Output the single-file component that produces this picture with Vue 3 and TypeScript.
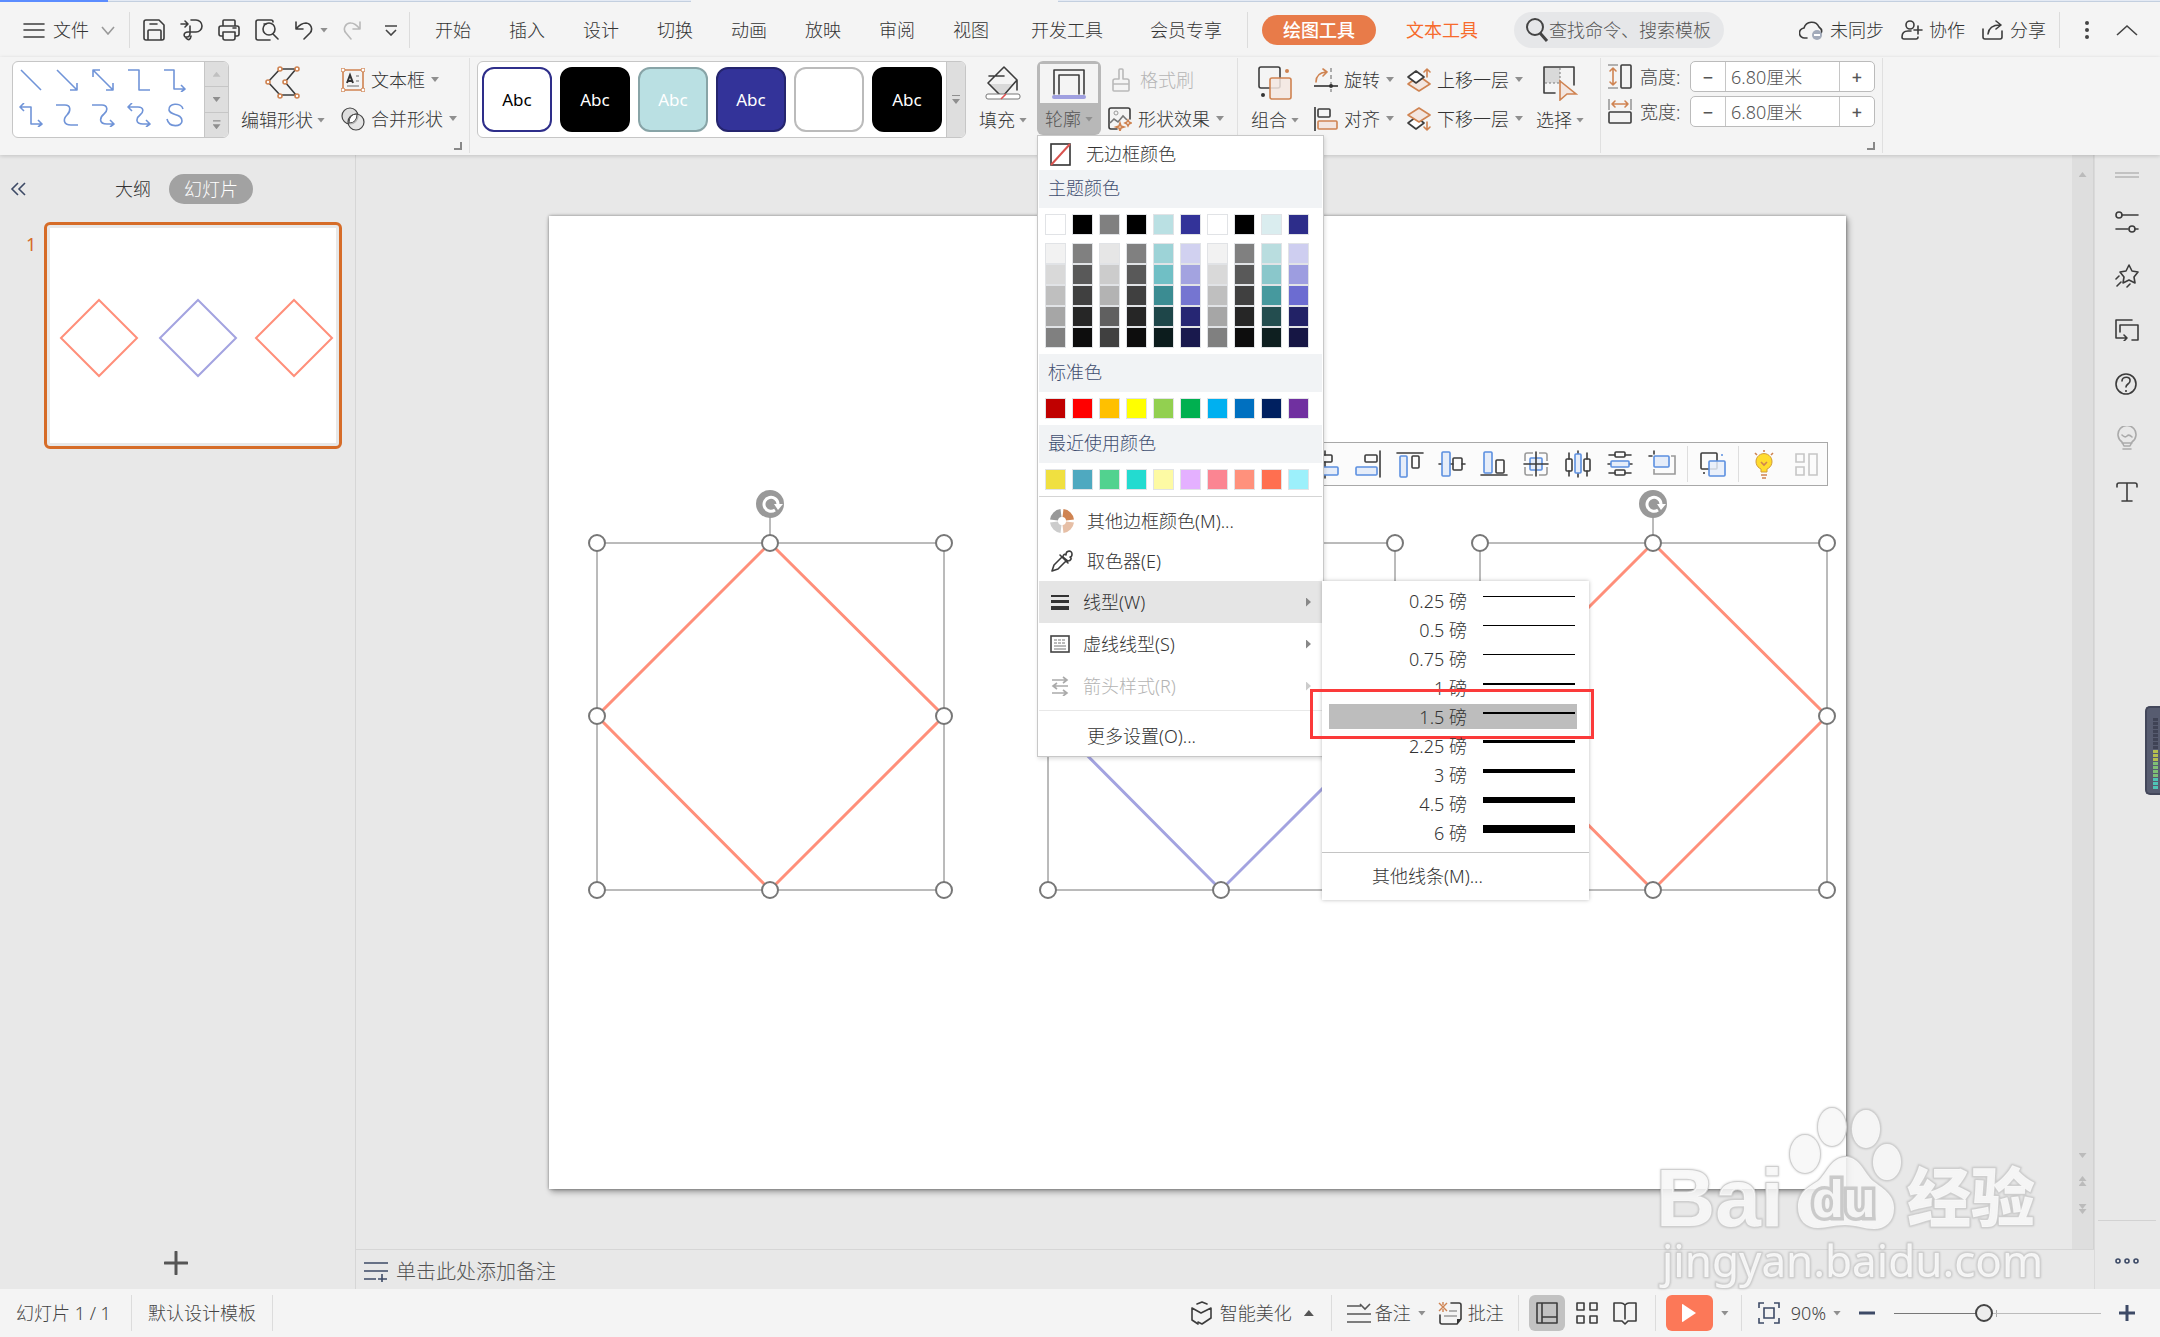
<script setup lang="ts">
import { h, ref, type FunctionalComponent } from 'vue'

const K = 'fill="none" stroke="#3c3c3c" stroke-width="1.6" stroke-linejoin="round" stroke-linecap="round"'
const G = 'fill="none" stroke="#b9b9b9" stroke-width="1.6" stroke-linejoin="round" stroke-linecap="round"'
const O = 'fill="none" stroke="#cf8351" stroke-width="1.6" stroke-linejoin="round" stroke-linecap="round"'
const OF = 'fill="#f3e6e0" stroke="#cf8351" stroke-width="1.6" stroke-linejoin="round"'
const B = 'fill="none" stroke="#7094d8" stroke-width="1.6" stroke-linejoin="round"'
const BF = 'fill="#e6edf9" stroke="#5b8fe0" stroke-width="1.6" stroke-linejoin="round"'
const N = 'fill="none" stroke="#3d4a66" stroke-width="1.6"'

/* name -> [width, height, markup] */
const icons: Record<string, [number, number, string]> = {
  burger: [22, 16, `<path ${K} d="M1 2h20M1 8h20M1 15h20"/>`],
  chev: [14, 9, `<path fill="none" stroke="#999" stroke-width="1.6" d="M1 1l6 7 6-7"/>`],
  save: [22, 22, `<path ${K} d="M3 1h13l5 5v13q0 2-2 2H3q-2 0-2-2V3q0-2 2-2zM5 21v-9q0-1 1-1h11q1 0 1 1v9M7 5h7"/>`],
  pdf: [23, 22, `<path ${K} d="M1 5h6M5 2l3 3-3 3M11 1h5a6 6 0 0 1 0 12H8c-5 0-5 6-1 5q3 0 3-4V7"/><path ${K} d="M6 19q4 4 5-2"/>`],
  print: [22, 22, `<path ${K} d="M5 7V2q0-1 1-1h10q1 0 1 1v5M5 17H3q-2 0-2-2V9q0-2 2-2h16q2 0 2 2v6q0 2-2 2h-2M5 13h12v6q0 2-2 2H7q-2 0-2-2zM15 9h3"/>`],
  preview: [24, 22, `<path ${K} d="M18 3q0-2-2-2H3Q1 1 1 3v16q0 2 2 2h12M11 5H9"/><circle ${K} cx="14" cy="10" r="6"/><path ${K} d="M18 15l5 5"/>`],
  undo: [19, 19, `<path ${K} d="M2 1v7h7M2 8Q7 2 12 2a6 6 0 0 1 4 10L10 18"/>`],
  redo: [19, 19, `<path ${G} d="M17 1v7h-7M17 8Q12 2 8 2a6 6 0 0 0-5 10L8 18"/>`],
  more: [12, 11, `<path fill="none" stroke="#444" stroke-width="1.6" d="M0 1h12M1 5l5 5 5-5"/>`],
  search: [24, 24, `<circle fill="none" stroke="#444" stroke-width="2" cx="10" cy="9" r="8"/><path fill="none" stroke="#444" stroke-width="3" d="M15 15l7 8"/>`],
  cloud: [25, 22, `<path ${K} d="M8 19H6a5 5 0 0 1-1-10a8 8 0 0 1 15-1q4 3 2 6"/><circle cx="18" cy="16" r="5" fill="#a3abba"/><path stroke="#fff" stroke-width="2" d="M15 16h6"/>`],
  team: [22, 20, `<circle ${K} cx="9" cy="5" r="4"/><path ${K} d="M10 11H7q-6 0-6 6 0 2 2 2h12q2 0 2-2M13 10h8M17 6v8"/>`],
  share: [22, 20, `<path ${K} d="M1 9v8q0 2 2 2h15q2 0 2-2v-6M6 14q1-9 12-9M14 1l5 4-5 4"/>`],
  kebab: [4, 18, `<g fill="#444"><circle cx="2" cy="2" r="2"/><circle cx="2" cy="9" r="2"/><circle cx="2" cy="16" r="2"/></g>`],
  up: [22, 12, `<path fill="none" stroke="#444" stroke-width="1.6" d="M1 11L11 2l10 9"/>`],
  s0: [24, 24, `<path ${B} d="M2 2l20 20"/>`],
  s1: [24, 24, `<path ${B} d="M2 2l20 20M22 15v7h-7"/>`],
  s2: [24, 24, `<path ${B} d="M2 2l20 20M22 15v7h-7M2 9V2h7"/>`],
  s3: [24, 24, `<path ${B} d="M1 2h11v20h11"/>`],
  s4: [24, 24, `<path ${B} d="M1 2h10v19h11M18 17l4 4-4 3"/>`],
  s5: [24, 24, `<path ${B} d="M1 4h11v17h11M5 0L1 4l4 4M19 17l4 4-4 3"/>`],
  s6: [24, 24, `<path ${B} d="M1 2h9c6 0 6 6 2 10s-4 10 4 10h7"/>`],
  s7: [24, 24, `<path ${B} d="M1 2h10c6 0 6 6 2 9s-6 10 3 10h7M19 17l4 4-4 3"/>`],
  s8: [24, 24, `<path ${B} d="M1 4h10c6 0 6 5 2 8s-5 9 3 9h7M5 0L1 4l4 4M19 17l4 4-4 3"/>`],
  s9: [24, 24, `<path ${B} d="M20 6C18-1 5 0 6 7c1 6 13 3 13 11 0 6-13 7-15-2"/>`],
  edit: [36, 34, `<path ${K} d="M15 3h16L20 16l11 13H15L3 16z"/><g fill="#fff" stroke="#cf8351" stroke-width="1.6"><circle cx="15" cy="3" r="2"/><circle cx="32" cy="3" r="2"/><circle cx="3" cy="16" r="2"/><circle cx="20" cy="16" r="2"/><circle cx="15" cy="30" r="2"/><circle cx="32" cy="30" r="2"/></g>`],
  textbox: [24, 24, `<path ${O} d="M2 2h20v20H2z"/><g fill="#fff" stroke="#cf8351"><circle cx="2" cy="2" r="2"/><circle cx="22" cy="2" r="2"/><circle cx="2" cy="22" r="2"/><circle cx="22" cy="22" r="2"/></g><path fill="none" stroke="#333" stroke-width="2" d="M6 15L9 7l3 8M7 13h4"/><path stroke="#999" stroke-width="1.6" d="M15 8h3M15 13h3M6 18h12"/>`],
  merge: [24, 24, `<circle cx="9" cy="9" r="8" fill="#dedede" stroke="#444" stroke-width="1.2"/><circle cx="15" cy="15" r="8" fill="#dedede" fill-opacity=".7" stroke="#444" stroke-width="1.2"/><path fill="#fff" stroke="#444" d="M16 7Q8 7 8 16q8 0 8-9z"/>`],
  fill: [36, 34, `<path fill="#d9d9d9" d="M4 18h25L18 29h-4z"/><path ${K} d="M19 1L3 17l12 12h4L32 14zM4 10h15M32 14v10"/><rect x="1" y="28" width="34" height="5" rx="2" fill="#fff" stroke="#777" stroke-width="1"/><path stroke="#e05050" stroke-width="1.6" d="M16 33l5-5"/>`],
  outline: [34, 32, `<path ${K} stroke-linejoin="miter" d="M2 26V2h30v24M7 26V7h20v19"/><rect x="0" y="27" width="34" height="4" rx="2" fill="#a0a0e0"/>`],
  brush: [18, 24, `<path ${G} d="M7 11V2q0-1 1-1h2q1 0 1 1v9h4q2 0 2 2v9q0 1-1 1H2q-1 0-1-1v-9q0-2 2-2zM1 16h16"/>`],
  effect: [24, 24, `<path ${K} d="M9 22H3q-2 0-2-2V3q0-2 2-2h17q2 0 2 2v9"/><circle cx="8" cy="6" r="2" fill="none" stroke="#999"/><path fill="none" stroke="#777" stroke-width="1.6" d="M2 16l4-4 4 3 5-6 4 4"/><path fill="#fff" stroke="#cf8351" stroke-width="1.6" d="M12 16l1 3 3 1-3 1-1 3-1-3-3-1 3-1zM20 13l1 2 2 1-2 1-1 2-1-2-2-1 2-1z"/>`],
  group: [36, 36, `<rect ${K} x="2" y="2" width="21" height="21" rx="2"/><rect ${OF} fill-opacity=".85" x="13" y="13" width="21" height="21" rx="2"/><circle cx="30" cy="6" r="2" fill="#cf8351"/><circle cx="6" cy="30" r="2" fill="#333"/>`],
  rotate: [24, 24, `<path ${O} d="M2 14Q2 5 12 4M9 1l4 3-4 4"/><path stroke="#999" stroke-width="1.6" stroke-dasharray="4 3" d="M17 0v24"/><path stroke="#333" stroke-width="1.6" d="M0 18h24"/><circle cx="17" cy="18" r="2" fill="#333"/>`],
  align: [24, 24, `<path stroke="#333" stroke-width="1.6" d="M1 0v24"/><rect ${K} x="4" y="2" width="12" height="8" rx="1"/><rect ${OF} x="4" y="14" width="19" height="8" rx="1"/>`],
  raise: [24, 24, `<path ${OF} d="M1 16l11-8 11 8-11 7z"/><path ${K} style="fill:#fff" d="M1 9l8-6 8 6-8 6z"/><path ${O} d="M20 9V2M17 4l3-3 3 3"/>`],
  lower: [24, 24, `<path ${K} style="fill:#fff" d="M1 16l8-6 8 6-8 6z"/><path ${OF} d="M1 8l11-7 11 7-11 7z"/><path ${O} d="M20 15v7M17 20l3 3 3-3"/>`],
  select: [36, 36, `<path fill="#d9d9d9" d="M2 2h16v16H2z"/><path ${K} d="M13 28H2V2h30v18"/><path fill="none" stroke="#777" stroke-dasharray="2 2" d="M18 3v15M3 18h15"/><path fill="#f3e6e0" stroke="#cf8351" stroke-width="1.6" d="M18 16l16 13h-9l-7 6z"/>`],
  height: [24, 25, `<path stroke="#999" stroke-width="1.6" d="M0 1h10M0 24h10"/><path ${O} d="M5 4v17M2 7l3-3 3 3M2 18l3 3 3-3"/><rect ${K} x="13" y="1" width="10" height="23" rx="1"/>`],
  width: [24, 25, `<path stroke="#999" stroke-width="1.6" d="M1 0v11M23 0v11"/><path ${O} d="M4 5h16M7 2L4 5l3 3M17 2l3 3-3 3"/><rect ${K} x="1" y="13" width="22" height="11" rx="1"/>`],
  corner: [8, 8, `<path fill="none" stroke="#888" stroke-width="2" d="M7 0v7H0"/>`],
  none: [21, 23, `<rect fill="#fff" stroke="#333" stroke-width="1.6" x="1" y="1" width="19" height="21"/><path stroke="#d9534f" stroke-width="2" d="M1 22L20 1"/>`],
  wheel: [24, 24, `<g fill="none" stroke-width="8"><path stroke="#cf8351" d="M13 4a8 8 0 0 1 7 7"/><path stroke="#e6bfa6" d="M20 13a8 8 0 0 1-7 7"/><path stroke="#ccc" d="M11 20a8 8 0 0 1-7-7"/><path stroke="#999" d="M4 11a8 8 0 0 1 7-7"/></g>`],
  dropper: [22, 22, `<path ${K} d="M11 7L3 15l-2 6 6-2 8-8M9 5l8 8M12 7c0-3 2-3 3-2 0-5 6-5 6-1 0 2-1 3-2 3 2 1 1 4-2 4z"/>`],
  weight: [20, 18, `<path fill="#333" d="M1 2h18v2H1zM1 7h18v3H1zM1 13h18v4H1z"/>`],
  dash: [20, 18, `<rect fill="#fff" stroke="#444" stroke-width="1.6" x="1" y="1" width="18" height="16"/><path stroke="#777" stroke-dasharray="3 1" d="M4 5h12M4 8h12"/><path stroke="#777" d="M4 11h12M4 14h12"/>`],
  arrows: [18, 20, `<path fill="none" stroke="#aaa" stroke-width="1.6" d="M1 4h15M12 1l4 3-4 3M17 10H2M6 7l-4 3 4 3M1 17h15M12 14l4 3-4 3"/>`],
  collapse: [17, 14, `<path fill="none" stroke="#3d4a66" stroke-width="1.6" d="M8 1L2 7l6 6M15 1L9 7l6 6"/>`],
  plus: [24, 24, `<path ${K} style="stroke:#555;stroke-width:3" d="M12 1v22M1 12h22"/>`],
  note: [24, 20, `<path ${N} d="M0 1h24M0 9h24M0 17h12M14 17h9M18 12v8"/>`],
  p0: [24, 8, `<path stroke="#c2c2c2" stroke-width="2" d="M0 2h24M0 6h24"/>`],
  p1: [24, 22, `<path ${K} d="M7 4h16M1 18h12M20 18h3"/><circle ${K} cx="4" cy="4" r="3"/><circle ${K} cx="17" cy="18" r="3"/>`],
  p2: [24, 24, `<path ${K} d="M14 1l3 6 6 1-4 5 1 6-6-3-6 3 1-6-4-5 6-1zM4 12l-3 3M6 18l-4 4M15 20l-3 3"/>`],
  p3: [24, 22, `<path ${K} d="M17 1H1v18h11M9 16l3 3-3 3M5 13V6h18v15h-6"/>`],
  p4: [23, 23, `<circle ${K} cx="11" cy="11" r="10"/><path ${K} d="M7 8c0-5 9-5 8 0 0 3-4 3-4 6"/><circle cx="11" cy="18" r="1" fill="#333"/>`],
  p5: [22, 24, `<path ${G} style="stroke:#aaa" d="M6 16a9 9 0 1 1 10 0l-2 4H8zM6 17h10M7 23h8M6 9q3 3 5 1t5 1"/>`],
  p6: [22, 20, `<path ${K} d="M1 5V3q0-2 2-2h16q2 0 2 2v2M11 1v18M6 19h10"/>`],
  ooo: [24, 8, `<g ${N}><circle cx="3" cy="4" r="2"/><circle cx="12" cy="4" r="2"/><circle cx="21" cy="4" r="2"/></g>`],
  smart: [22, 24, `<path ${K} d="M6 3l5-2 5 2M1 7v12l6 4M1 7l9 5 10-5v10l-9 6-4-2"/>`],
  remark: [24, 22, `<path fill="none" stroke="#555" stroke-width="1.6" d="M0 4h14M13 2l5 5 5-5M0 12h24M0 20h24"/>`],
  comment: [24, 23, `<path ${K} d="M13 1h8q2 0 2 2v14l-4 5H4q-2 0-2-2v-7"/><path stroke="#999" stroke-width="1.6" d="M11 9h8M6 14h13"/><path fill="none" stroke="#cf8351" stroke-width="1.4" d="M1 1l8 8M9 1L1 9M5 0v3M5 7v3"/><path d="M23 17l-4 5v-5z" fill="#333"/>`],
  normal: [24, 24, `<path ${K} d="M2 2h20v20H2zM7 2v20M7 16h15"/>`],
  grid: [22, 22, `<path ${K} stroke-linejoin="miter" d="M1 1h7v7H1zM14 1h7v7h-7zM1 14h7v7H1zM14 14h7v7h-7z"/>`],
  book: [24, 24, `<path ${K} d="M12 4q-2-2-4-2H1v18h8l3 3 3-3h8V2h-7q-2 0-4 2zM12 4v14"/>`],
  play: [16, 20, `<path fill="#fff" d="M1 2q0-2 2 0l12 8L3 18q-2 2-2 0z"/>`],
  fit: [22, 22, `<path ${N} d="M1 6V1h5M16 1h5v5M21 16v5h-5M6 21H1v-5M6 6h10v10H6z"/>`],
  minus: [16, 16, `<path stroke="#3d4a66" stroke-width="3" d="M0 8h16"/>`],
  add: [16, 16, `<path stroke="#3d4a66" stroke-width="3" d="M0 8h16M8 0v16"/>`],
  a0: [30, 30, `<path ${K} d="M14 2v4M14 13v5M14 26v3"/><rect ${K} x="7" y="6" width="14" height="7" rx="1"/><rect ${BF} x="2" y="18" width="25" height="8" rx="1"/>`],
  a1: [30, 30, `<path ${K} d="M27 2v26"/><rect ${K} x="12" y="6" width="12" height="7" rx="1"/><rect ${BF} x="3" y="18" width="21" height="8" rx="1"/>`],
  a2: [30, 30, `<path ${K} d="M2 4h26"/><rect ${BF} x="5" y="7" width="7" height="21" rx="1"/><rect ${K} x="17" y="7" width="7" height="12" rx="1"/>`],
  a3: [30, 30, `<path ${K} d="M2 15h3M13 15h3M25 15h3"/><rect ${BF} x="5" y="3" width="8" height="24" rx="1"/><rect ${K} x="16" y="9" width="9" height="12" rx="1"/>`],
  a4: [30, 30, `<path ${K} d="M2 26h26"/><rect ${BF} x="5" y="3" width="8" height="21" rx="1"/><rect ${K} x="17" y="11" width="8" height="13" rx="1"/>`],
  a5: [30, 30, `<path fill="none" stroke="#999" stroke-width="1.6" d="M4 12V6q0-2 2-2h6M18 4h6q2 0 2 2v6M26 18v6q0 2-2 2h-6M12 26H6q-2 0-2-2v-6"/><rect ${BF} x="9" y="9" width="12" height="12" rx="1"/><path ${K} d="M3 15h24M15 3v24"/>`],
  a6: [30, 30, `<path ${K} d="M6 4v6M6 22v5M15 2v3M15 24v4M24 4v6M24 22v5"/><rect ${K} x="3" y="10" width="6" height="12" rx="1"/><rect ${BF} x="12" y="5" width="6" height="19" rx="1"/><rect ${K} x="21" y="10" width="6" height="12" rx="1"/>`],
  a7: [30, 30, `<path ${K} d="M4 6h6M20 6h6M3 15h3M24 15h3M4 24h6M20 24h6"/><rect ${K} x="10" y="3" width="10" height="5" rx="1"/><rect ${BF} x="6" y="12" width="18" height="6" rx="1"/><rect ${K} x="10" y="21" width="10" height="5" rx="1"/>`],
  a8: [30, 30, `<path ${K} d="M2 7h3M7 2v3"/><path fill="none" stroke="#999" stroke-width="1.6" d="M24 7h4v18H7v-5"/><rect ${BF} x="7" y="7" width="15" height="11" rx="1"/>`],
  a9: [30, 30, `<rect ${K} x="3" y="4" width="16" height="16" rx="1"/><rect ${BF} fill-opacity=".85" x="11" y="12" width="16" height="15" rx="1"/><circle cx="24" cy="6" r="1" fill="#5b8fe0"/><circle cx="6" cy="24" r="1" fill="#333"/>`],
  a10: [30, 30, `<path fill="#ffdc2e" stroke="#d09a3a" stroke-width="1" d="M12 23v-3a8 8 0 1 1 6 0v3z"/><path fill="none" stroke="#cf8351" stroke-width="1.6" d="M12 13l3 3 3-3M12 26h6M13 29h4M15 1v2M6 4l2 2M24 4l-2 2"/>`],
  a11: [30, 30, `<path fill="none" stroke="#c6c6c6" stroke-width="1.6" d="M5 5h8v8H5zM5 18h8v8H5zM18 5h8v21h-8z"/>`],
}

const Icon: FunctionalComponent<{ n: string }> = (props) => {
  const [w, ht, body] = icons[props.n]
  return h('svg', { width: w, height: ht, viewBox: `0 0 ${w} ${ht}`, innerHTML: body, 'aria-hidden': 'true', class: 'ico' })
}
Icon.props = ['n']

const tabs = ['开始', '插入', '设计', '切换', '动画', '放映', '审阅', '视图']
const wideTabs = ['开发工具', '会员专享']
const styles = [
  { bg: '#ffffff', bd: '#2e2e8a', fg: '#000000', t: 'Abc' },
  { bg: '#000000', bd: '#000000', fg: '#ffffff', t: 'Abc' },
  { bg: '#bae0e3', bd: '#88a4a7', fg: '#ffffff', t: 'Abc' },
  { bg: '#333399', bd: '#25256e', fg: '#ffffff', t: 'Abc' },
  { bg: '#ffffff', bd: '#bbbbbb', fg: '#ffffff', t: '' },
  { bg: '#000000', bd: '#000000', fg: '#ffffff', t: 'Abc' },
]
const themeTop = ['#ffffff', '#000000', '#808080', '#000000', '#bae0e3', '#333399', '#ffffff', '#000000', '#daedef', '#2d2d8a']
const themeGrid = [
  ['#f2f2f2', '#808080', '#e6e6e6', '#808080', '#9dd3d7', '#d1d1f0', '#f2f2f2', '#808080', '#b9dddf', '#cecef0'],
  ['#d9d9d9', '#595959', '#cccccc', '#595959', '#70bfc5', '#a3a3e0', '#d9d9d9', '#595959', '#8ac7cb', '#9d9de0'],
  ['#bfbfbf', '#404040', '#b3b3b3', '#404040', '#3b8c92', '#7575d1', '#bfbfbf', '#404040', '#46999e', '#6c6cd1'],
  ['#a6a6a6', '#262626', '#606060', '#262626', '#1e4649', '#262673', '#a6a6a6', '#262626', '#234d4f', '#222266'],
  ['#808080', '#0d0d0d', '#404040', '#0d0d0d', '#0c1c1d', '#19194d', '#808080', '#0d0d0d', '#0e1f20', '#161644'],
]
const standard = ['#c00000', '#ff0000', '#ffc000', '#ffff00', '#92d050', '#00b050', '#00b0f0', '#0070c0', '#002060', '#7030a0']
const recent = ['#f0e040', '#4fa9c0', '#52d28f', '#23dbd0', '#fdfaa4', '#e4b0ff', '#fb8592', '#ff917c', '#ff6f50', '#9cf0fb']
const weights = [
  { t: '0.25', w: 1 }, { t: '0.5', w: 1 }, { t: '0.75', w: 1 }, { t: '1', w: 2 }, { t: '1.5', w: 2 },
  { t: '2.25', w: 3 }, { t: '3', w: 4 }, { t: '4.5', w: 6 }, { t: '6', w: 8 },
]
const shapes = [
  { x: 48, c: '#ff8f7a' },
  { x: 499, c: '#a3a3e0' },
  { x: 931, c: '#ff8f7a' },
]
const handles = [[0, 0], [173, 0], [347, 0], [0, 173], [347, 173], [0, 347], [173, 347], [347, 347]]
const heightVal = ref('6.80厘米')
const widthVal = ref('6.80厘米')
const zoom = ref(43)
const notes = ref('')
</script>

<template>
  <div class="app">
    <div class="strip"><i class="s-a"></i><i class="s-b"></i><i class="s-c"></i><i class="s-d"></i></div>
    <header class="bar">
      <button class="file"><Icon n="burger" /><span>文件</span><Icon n="chev" /></button>
      <i class="vr"></i>
      <div class="quick">
        <button aria-label="保存"><Icon n="save" /></button>
        <button aria-label="输出为PDF"><Icon n="pdf" /></button>
        <button aria-label="打印"><Icon n="print" /></button>
        <button aria-label="打印预览"><Icon n="preview" /></button>
        <button class="undo" aria-label="撤销"><Icon n="undo" /><i class="caret"></i></button>
        <button aria-label="恢复"><Icon n="redo" /></button>
        <button class="last" aria-label="更多"><Icon n="more" /></button>
      </div>
      <i class="vr"></i>
      <nav class="tabs">
        <button v-for="t in tabs" :key="t">{{ t }}</button>
        <button v-for="t in wideTabs" :key="t" class="wide">{{ t }}</button>
      </nav>
      <i class="vr"></i>
      <button class="pill">绘图工具</button>
      <button class="texttool">文本工具</button>
      <label class="search"><Icon n="search" /><input type="text" placeholder="查找命令、搜索模板" aria-label="查找命令、搜索模板" /></label>
      <div class="account">
        <button><Icon n="cloud" />未同步</button>
        <button><Icon n="team" />协作</button>
        <button><Icon n="share" />分享</button>
        <i class="vr"></i>
        <button aria-label="菜单"><Icon n="kebab" /></button>
        <button aria-label="收起"><Icon n="up" /></button>
      </div>
    </header>

    <div class="ribbon">
      <section class="grp g1">
        <div class="gallery">
          <div class="lines"><button v-for="i in 10" :key="i" aria-label="连接线"><Icon :n="'s' + (i - 1)" /></button></div>
          <div class="scroller"><button aria-label="上"><i class="caret upc dim"></i></button><button aria-label="下"><i class="caret"></i></button><button aria-label="展开"><i class="caret bar-top"></i></button></div>
        </div>
        <button class="big b-edit"><Icon n="edit" /><span>编辑形状<i class="caret"></i></span></button>
        <div class="col">
          <button><Icon n="textbox" />文本框<i class="caret"></i></button>
          <button><Icon n="merge" />合并形状<i class="caret"></i></button>
        </div>
        <Icon n="corner" class="corner" />
      </section>

      <section class="grp g2">
        <div class="gallery presets">
          <div class="tiles">
            <button v-for="(s, i) in styles" :key="i" :style="{ background: s.bg, borderColor: s.bd, color: s.fg }" aria-label="样式">{{ s.t }}</button>
          </div>
          <div class="scroller thin"><button aria-label="展开"><i class="caret bar-top"></i></button></div>
        </div>
        <button class="big b-fill"><Icon n="fill" /><span>填充<i class="caret"></i></span></button>
        <div class="outline">
          <button class="big active"><b><Icon n="outline" /></b><span>轮廓<i class="caret"></i></span></button>
          <div class="menu">
            <button class="m-none"><Icon n="none" />无边框颜色</button>
            <h4>主题颜色</h4>
            <div class="sw top"><button v-for="(c, i) in themeTop" :key="i" :style="{ background: c }" aria-label="颜色"></button></div>
            <div class="shades">
              <div v-for="(r, j) in themeGrid" :key="j" class="sw"><button v-for="(c, i) in r" :key="i" :style="{ background: c }" aria-label="颜色"></button></div>
            </div>
            <h4>标准色</h4>
            <div class="sw solo"><button v-for="c in standard" :key="c" :style="{ background: c }" aria-label="颜色"></button></div>
            <h4>最近使用颜色</h4>
            <div class="sw solo"><button v-for="c in recent" :key="c" :style="{ background: c }" aria-label="颜色"></button></div>
            <hr />
            <div class="items">
              <button class="mi ind"><Icon n="wheel" />其他边框颜色(M)...</button>
              <button class="mi ind"><Icon n="dropper" />取色器(E)</button>
              <div class="sub-host">
                <button class="mi tall on"><Icon n="weight" />线型(W)<i class="arr"></i></button>
                <div class="submenu">
                  <button v-for="w in weights" :key="w.t" class="w-row" :class="{ sel: w.t === '1.5' }">
                    <span>{{ w.t }} 磅</span><i><b :style="{ height: w.w + 'px' }"></b></i>
                    <em v-if="w.t === '1.5'" class="mark"></em>
                  </button>
                  <hr />
                  <button class="w-more">其他线条(M)...</button>
                </div>
              </div>
              <button class="mi tall"><Icon n="dash" />虚线线型(S)<i class="arr"></i></button>
              <button class="mi tall off" disabled><Icon n="arrows" />箭头样式(R)<i class="arr"></i></button>
            </div>
            <hr class="light" />
            <button class="mi more">更多设置(O)...</button>
          </div>
        </div>
        <div class="col">
          <button class="off" disabled><Icon n="brush" />格式刷</button>
          <button><Icon n="effect" />形状效果<i class="caret"></i></button>
        </div>
      </section>

      <section class="grp g3">
        <button class="big"><Icon n="group" /><span>组合<i class="caret"></i></span></button>
        <div class="col">
          <button><Icon n="rotate" />旋转<i class="caret"></i></button>
          <button><Icon n="align" />对齐<i class="caret"></i></button>
        </div>
        <div class="col">
          <button><Icon n="raise" />上移一层<i class="caret"></i></button>
          <button><Icon n="lower" />下移一层<i class="caret"></i></button>
        </div>
        <button class="big"><Icon n="select" /><span>选择<i class="caret"></i></span></button>
      </section>

      <section class="grp g4">
        <div class="size"><Icon n="height" /><label for="sh">高度:</label>
          <div class="spin"><button aria-label="减">−</button><input id="sh" v-model="heightVal" type="text" /><button aria-label="加">+</button></div>
        </div>
        <div class="size"><Icon n="width" /><label for="sw">宽度:</label>
          <div class="spin"><button aria-label="减">−</button><input id="sw" v-model="widthVal" type="text" /><button aria-label="加">+</button></div>
        </div>
        <Icon n="corner" class="corner" />
      </section>
    </div>

    <div class="body">
      <aside class="left">
        <div class="ltabs">
          <button class="fold" aria-label="收起"><Icon n="collapse" /></button>
          <button class="outl">大纲</button>
          <button class="cur">幻灯片</button>
        </div>
        <div class="thumb-row">
          <span>1</span>
          <button class="thumb" aria-label="幻灯片 1">
            <svg viewBox="0 0 286 215" fill="none" stroke-width="2">
              <path stroke="#ff8f7a" d="M49 72l38 38-38 38-38-38z" />
              <path stroke="#a3a3e0" d="M148 72l38 38-38 38-38-38z" />
              <path stroke="#ff8f7a" d="M244 72l38 38-38 38-38-38z" />
            </svg>
          </button>
        </div>
        <button class="new" aria-label="新建幻灯片"><Icon n="plus" /></button>
      </aside>

      <main class="center">
        <div class="stage-row">
          <div class="stage">
            <div class="slide">
              <div class="mini">
                <button v-for="i in 9" :key="i" aria-label="对齐"><Icon :n="'a' + (i - 1)" /></button>
                <i></i>
                <button aria-label="组合"><Icon n="a9" /></button>
                <i></i>
                <button aria-label="提示"><Icon n="a10" /></button>
                <button aria-label="布局"><Icon n="a11" /></button>
              </div>
              <svg v-for="s in shapes" :key="s.x" class="shape" :style="{ left: s.x - 12 + 'px' }" width="371" height="412" viewBox="-12 -53 371 412">
                <path d="M0 0h347v347H0z" fill="none" stroke="#777" />
                <path d="M173 0l174 173-174 174L0 173z" fill="none" :stroke="s.c" stroke-width="3" />
                <path d="M173 -26v20" stroke="#777" />
                <circle cx="173" cy="-39" r="14" fill="#999" />
                <path d="M178 -33a7 7 0 1 1 3 -6" fill="none" stroke="#fff" stroke-width="3" />
                <path d="M177 -39h9l-5 6z" fill="#fff" />
                <circle v-for="(p, i) in handles" :key="i" :cx="p[0]" :cy="p[1]" r="8" fill="#fff" stroke="#777" stroke-width="2" />
              </svg>
            </div>
          </div>
          <div class="vscroll">
            <i class="caret upc"></i>
            <div class="vs-bottom"><i class="caret"></i><div><i class="caret upc"></i><i class="caret upc"></i></div><div><i class="caret"></i><i class="caret"></i></div></div>
          </div>
        </div>
        <label class="notes"><Icon n="note" /><input v-model="notes" type="text" placeholder="单击此处添加备注" aria-label="备注" /></label>
      </main>

      <aside class="right">
        <Icon n="p0" class="grip" />
        <button v-for="i in 6" :key="i" aria-label="窗格"><Icon :n="'p' + i" /></button>
        <div class="dots"><button aria-label="更多"><Icon n="ooo" /></button></div>
        <div class="gauge"><i v-for="i in 18" :key="i" :class="{ y: i > 8, g: i > 11, t: i > 15 }"></i></div>
      </aside>
    </div>

    <footer class="status">
      <span class="page">幻灯片 1 / 1</span><i class="vr"></i><span class="tpl">默认设计模板</span><i class="vr"></i>
      <div class="st-right">
        <button class="smart"><Icon n="smart" />智能美化<i class="caret upc dark"></i></button>
        <i class="vr"></i>
        <button class="rem"><Icon n="remark" />备注<i class="caret"></i></button>
        <button class="com"><Icon n="comment" />批注</button>
        <i class="vr"></i>
        <button class="view on" aria-label="普通视图"><Icon n="normal" /></button>
        <button class="view" aria-label="浏览"><Icon n="grid" /></button>
        <button class="view" aria-label="阅读"><Icon n="book" /></button>
        <i class="vr"></i>
        <button class="play" aria-label="放映"><Icon n="play" /></button><i class="caret pc"></i>
        <i class="vr"></i>
        <button class="fit" aria-label="适应窗口"><Icon n="fit" /></button>
        <button class="pct">90%<i class="caret"></i></button>
        <button aria-label="缩小"><Icon n="minus" /></button>
        <div class="range"><input v-model="zoom" type="range" min="0" max="100" aria-label="缩放" /></div>
        <button aria-label="放大"><Icon n="add" /></button>
      </div>
    </footer>

    <svg class="wm" width="400" height="190" viewBox="0 0 400 190">
      <g fill="#fff" fill-opacity=".82" stroke="#cfcfcf" stroke-width="2" paint-order="stroke">
        <ellipse cx="155" cy="54" rx="15" ry="19" />
        <ellipse cx="182" cy="27" rx="14" ry="19" />
        <ellipse cx="216" cy="29" rx="14" ry="19" />
        <ellipse cx="237" cy="62" rx="14" ry="18" />
        <path d="M196 57c14 0 18 16 27 24 9 7 21 13 21 27 0 14-9 21-20 21-10 0-17-4-29-4s-18 3-27 3c-12 0-20-8-20-21 0-14 9-19 20-26 9-8 13-24 28-24z" />
        <text x="6" y="126" class="w-bai">Bai</text>
        <text x="257" y="121" class="w-cn">经验</text>
        <text x="12" y="177" class="w-url">jingyan.baidu.com</text>
      </g>
      <text x="162" y="117" class="w-du">du</text>
    </svg>
  </div>
</template>

<style>
body { background: #e8e8e8; }
</style>

<style scoped>
.app { position: relative; min-height: 100vh; display: flex; flex-direction: column; overflow: hidden; background: #e8e8e8; color: #333; font: 300 18px/24px 'Noto Sans', 'Noto Sans CJK SC', sans-serif; white-space: nowrap; }
.app * { box-sizing: border-box; }
button { font: inherit; color: inherit; background: none; border: 0; padding: 0; display: flex; align-items: center; justify-content: center; }
input { font: inherit; color: #555; background: none; border: 0; padding: 0; outline: 0; min-width: 0; }
input::placeholder { color: #555; opacity: 1; }
.ico { display: block; flex: none; }
.caret { flex: none; width: 8px; height: 5px; background: #8f8f8f; clip-path: polygon(0 0, 100% 0, 50% 100%); display: block; }
.upc { clip-path: polygon(50% 0, 100% 100%, 0 100%); }
.dim { background: #c0c0c0; }
.dark { background: #555; width: 10px; }
.bar-top { height: 9px; clip-path: polygon(0 0, 100% 0, 100% 12%, 0 12%, 0 45%, 100% 45%, 50% 100%, 0 45%); }
.vr { flex: none; width: 1px; height: 36px; background: #dcdcdc; }

.strip { display: flex; height: 3px; background: #f4f4f4; }
.strip i { height: 2px; border-bottom: 1px solid #c3cfdf; background: #e4eaf4; }
.strip .s-a { width: 5%; background: #5b8cff; border-color: #5b8cff; }
.strip .s-b { width: 27%; }
.strip .s-c { width: 17%; background: none; border: 0; }
.strip .s-d { flex: 1; }

.bar { height: 54px; display: flex; align-items: center; padding: 0 22px 0 23px; background: #f4f4f4; }
.file { margin-right: 14px; }
.file span { margin: 0 12px 0 8px; }
.quick { display: flex; align-items: center; gap: 15px; margin: 0 12px 0 13px; }
.quick .undo { gap: 7px; }
.quick .last { margin-left: 8px; }
.tabs { display: flex; margin: 0 25px 0 6px; }
.tabs button { padding: 0 19px; }
.tabs .wide { padding: 0 24px 0 23px; }
.tabs .wide:last-child { padding-right: 0; }
.pill { width: 114px; height: 30px; margin-left: 14px; border-radius: 15px; background: #e87b49; color: #fff; font-weight: 500; }
.texttool { margin-left: 30px; color: #f76b2c; font-weight: 400; }
.search { display: flex; align-items: center; width: 210px; height: 36px; margin-left: 36px; padding-left: 11px; border-radius: 18px; background: #e6e7e9; }
.search input { flex: 1; }
.account { display: flex; align-items: center; margin-left: auto; }
.account button { gap: 6px; margin-left: 17px; }
.account .vr { margin: 0 8px 0 13px; }
.account button:last-child { margin-left: 27px; }

.ribbon { position: relative; z-index: 5; height: 98px; display: flex; align-items: flex-start; padding: 1px 0 0 12px; background: #f4f4f4; box-shadow: 0 1px 4px #0000002a; }
.grp { position: relative; height: 95px; display: flex; align-items: flex-start; padding-top: 2px; border-right: 1px solid #e0e0e0; }
.g1 { width: 458px; }
.g2 { padding: 2px 13px 0 7px; }
.g3 { padding: 2px 16px 0 13px; }
.g4 { flex-direction: column; gap: 2px; padding: 2px 7px 0 7px; }
.corner { position: absolute; right: 7px; bottom: 3px; }
.gallery { display: flex; height: 77px; margin-top: 1px; border: 1px solid #c6c6c6; border-radius: 6px; background: #fff; overflow: hidden; }
.lines { display: grid; grid-template-columns: repeat(5, 36px); width: 191px; padding-bottom: 4px; align-items: center; }
.scroller { width: 24px; border-left: 1px solid #c6c6c6; background: #dedede; display: flex; flex-direction: column; }
.scroller button { flex: 1; }
.scroller button + button { border-top: 1px solid #c6c6c6; }
.thin { width: 19px; }
.presets { width: 489px; }
.tiles { flex: 1; display: flex; gap: 8px; padding: 5px 4px; }
.tiles button { width: 70px; height: 65px; border: 2px solid; border-radius: 12px; font-size: 17px; font-weight: 400; }
.big { flex-direction: column; height: 80px; justify-content: flex-start; }
.big > .ico { height: 36px; margin: 5px 0 3px; }
.big span { display: flex; align-items: center; gap: 4px; height: 32px; }
.b-edit { margin: 0 16px 0 12px; }
.b-fill { margin: 0 10px 0 13px; }
.outline { position: relative; margin-right: 7px; padding-top: 1px; }
.active { width: 64px; height: 74px; padding-top: 3px; background: #b8b8b8; border-radius: 6px; color: #555; }
.active b { width: 58px; height: 39px; display: flex; align-items: center; justify-content: center; background: #f4f4f4; }
.col { display: flex; flex-direction: column; }
.col button { height: 39px; gap: 6px; justify-content: flex-start; }
.g2 .col .off .ico { margin: 0 3px; }
.off { color: #b4b4b4; }
.g3 .col { margin-left: 15px; }
.g3 .col + .col { margin-left: 13px; }
.g3 .big:last-child { margin-left: 13px; }
.size { display: flex; align-items: center; height: 33px; }
.size label { width: 58px; padding-left: 8px; color: #444; }
.spin { display: flex; width: 185px; height: 31px; border: 1px solid #bbb; border-radius: 5px; background: #fff; color: #555; }
.spin button { width: 34px; font-weight: 500; }
.spin input { flex: 1; padding-left: 5px; border: solid #c6c6c6; border-width: 0 1px; }

.menu { position: absolute; left: 0; top: 75px; width: 287px; height: 622px; border: 1px solid #c8c8c8; padding: 0 1px; background: #fff; box-shadow: 1px 2px 4px #0002; }
.m-none { height: 34px; width: 100%; justify-content: flex-start; gap: 15px; padding: 2px 0 0 11px; }
h4 { margin: 0; height: 38px; padding-left: 9px; background: #f1f3f5; font-weight: inherit; font-size: 18px; line-height: 36px; color: #3f4e70; }
.sw { display: flex; gap: 6px; padding-left: 6px; }
.sw button { width: 21px; height: 21px; border: 1px solid #e1e3e6; }
.top { padding-top: 6px; }
.shades { padding: 8px 0 6px; }
.solo { padding-top: 6px; padding-bottom: 6px; }
hr { margin: 0; border: 0; height: 1px; background: #d5d5d5; }
.light { background: #e8e8e8; }
.items { padding: 4px 0 3px; }
.mi { position: relative; width: 100%; height: 40px; justify-content: flex-start; gap: 13px; padding-left: 11px; }
.ind .ico { width: 24px; }
.tall { height: 42px; }
.on.mi { background: #e5e5e5; }
.arr { margin: 0 11px 0 auto; width: 5px; height: 9px; background: #888; clip-path: polygon(0 0, 100% 50%, 0 100%); }
.off .arr { background: #ccc; }
.off .ico { width: 20px; }
.more { height: 45px; padding: 5px 0 0 48px; }
.sub-host { position: relative; }
.submenu { position: absolute; z-index: 2; left: 283px; top: 0; width: 267px; height: 319px; padding-top: 7px; background: #fff; box-shadow: 0 0 4px #0004; }
.w-row { position: relative; width: 248px; height: 25px; margin: 0 7px 4px; justify-content: flex-start; align-items: flex-start; }
.w-row span { width: 138px; text-align: right; line-height: 27px; }
.w-row i { width: 92px; height: 17px; margin-left: 16px; display: flex; align-items: center; }
.w-row b { flex: 1; background: #000; }
.w-row.sel { background: #bdbdbd; }
.mark { position: absolute; left: -19px; top: -15px; width: 284px; height: 50px; border: 3px solid #fb3a3a; }
.submenu hr { margin-top: 7px; background: #c4c4c4; }
.w-more { height: 46px; padding-left: 50px; }

.body { flex: 1; display: flex; }
.left { width: 356px; border-right: 1px solid #d6d6d6; display: flex; flex-direction: column; }
.ltabs { display: flex; align-items: center; height: 30px; margin: 19px 0 18px 10px; }
.outl { margin: 0 18px 0 88px; }
.cur { width: 84px; height: 30px; border-radius: 15px; background: #a2a2a2; color: #fff; }
.thumb-row { display: flex; padding-left: 26px; }
.thumb-row span { width: 18px; padding-top: 10px; color: #d66c28; font-weight: 400; }
.thumb { width: 298px; height: 227px; border: 3px solid #d66c28; border-radius: 6px; padding: 3px; }
.thumb svg { width: 100%; background: #fff; }
.new { margin: auto auto 14px 164px; }
.center { flex: 1; display: flex; flex-direction: column; min-width: 0; }
.stage-row { flex: 1; display: flex; }
.stage { flex: 1; display: flex; padding: 61px 226px 60px 193px; }
.slide { position: relative; flex: 1; background: #fff; box-shadow: 0 0 3px #0006, 2px 3px 6px #0005; }
.mini { position: absolute; right: 18px; top: 226px; height: 44px; display: flex; align-items: center; border: 1px solid #a8a8a8; background: #fbfbfb; }
.mini button { width: 42px; }
.mini > i { width: 1px; height: 36px; margin: 0 4px; background: #dedede; }
.shape { position: absolute; top: 274px; }
.vscroll { width: 22px; background: #dedede; border-right: 1px solid #d2d2d2; display: flex; flex-direction: column; align-items: center; padding: 17px 0 35px; }
.vscroll .caret { background: #bbb; }
.vs-bottom { margin-top: auto; display: flex; flex-direction: column; gap: 18px; }
.notes { display: flex; align-items: center; gap: 8px; height: 40px; padding: 4px 0 0 8px; border-top: 1px solid #d6d6d6; font-size: 20px; }
.notes input { flex: 1; }
.right { position: relative; width: 66px; padding-right: 2px; border-left: 1px solid #dadada; display: flex; flex-direction: column; align-items: center; }
.grip { margin: 16px 0; }
.right > button { height: 54px; }
.dots { margin: auto 4px 0; width: 58px; height: 69px; padding-top: 36px; border-top: 1px solid #d2d2d2; display: flex; align-items: flex-start; justify-content: center; }
.gauge { position: absolute; right: 0; top: 551px; width: 15px; height: 89px; padding: 10px 2px 0 6px; border: 2px solid #43475a; border-right: 0; border-radius: 5px 0 0 5px; background: #575c70; display: flex; flex-direction: column; gap: 1px; }
.gauge i { flex: none; height: 3px; background: #3f4355; }
.gauge .y { background: #b5bf4f; }
.gauge .g { background: #7fbf75; }
.gauge .t { background: #4fc4b5; }

.status { height: 48px; display: flex; align-items: center; background: #f4f4f4; color: #444; }
.page { width: 131px; padding-left: 16px; }
.tpl { width: 140px; padding-left: 16px; }
.st-right { display: flex; align-items: center; margin-left: auto; padding-right: 25px; }
.smart { gap: 7px; margin-right: 17px; }
.smart .caret { margin-left: 5px; height: 6px; }
.rem { gap: 4px; margin: 0 12px 0 15px; }
.rem .caret { margin-left: 3px; }
.com { gap: 6px; margin-right: 14px; }
.view { width: 36px; height: 36px; margin-left: 2px; }
.view.on { margin-left: 10px; background: #c2c2c2; border-radius: 6px; margin-right: 2px; }
.view + .vr { margin-left: 12px; }
.play { width: 47px; height: 36px; margin: 0 8px 0 10px; border-radius: 6px; background: #fc7858; }
.pc { margin-right: 12px; }
.fit { margin: 0 11px 0 16px; }
.pct { gap: 7px; margin-right: 18px; }
.range { position: relative; width: 207px; margin: 0 18px 0 19px; display: flex; }
.range::before { content: ''; position: absolute; left: 102px; top: 6px; width: 1px; height: 7px; background: #aaa; }
.range input { position: relative; appearance: none; width: 100%; height: 18px; margin: 0; background: linear-gradient(90deg, #777 43%, #bbb 43%) center / 100% 1px no-repeat; }
.range input::-webkit-slider-thumb { appearance: none; width: 18px; height: 18px; border: 2px solid #444; border-radius: 9px; background: #ececec; }

.wm { position: absolute; z-index: 4; right: 110px; bottom: 47px; pointer-events: none; filter: drop-shadow(0 0 1px #0003); }
.w-bai { font: 700 82px 'Liberation Sans', sans-serif; }
.w-du { font: 700 52px 'Liberation Sans', sans-serif; fill: #f4f4f4; stroke: #cacaca; stroke-width: 7px; paint-order: stroke; }
.w-cn { font: 900 64px 'Noto Sans CJK SC', sans-serif; }
.w-url { font: 400 44px 'Noto Sans', sans-serif; }
</style>
